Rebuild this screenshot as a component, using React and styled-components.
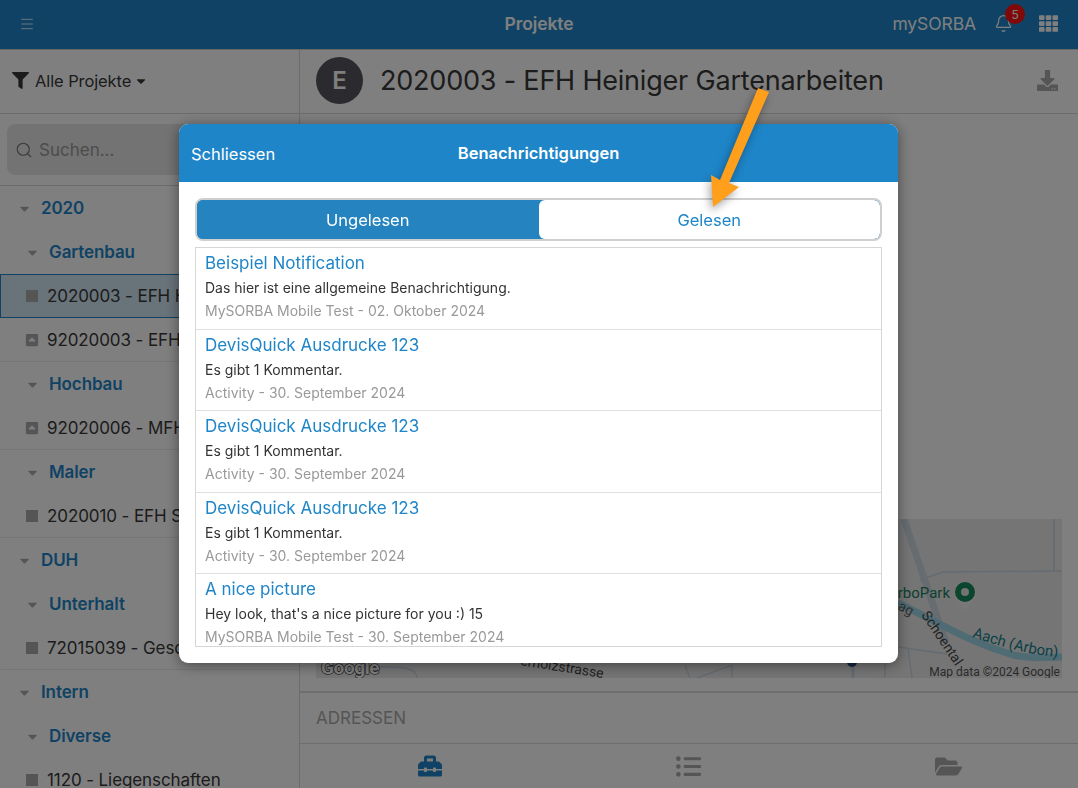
import React from "react";
import styled, { createGlobalStyle } from "styled-components";
import { Menu, Bell, Search } from "lucide-react";
import {
  FaFilter,
  FaCaretDown,
  FaTh,
  FaDownload,
  FaToolbox,
  FaListUl,
  FaFolderOpen,
  FaSquareFull,
  FaCaretSquareUp,
} from "react-icons/fa";

const tree = [
  { type: "year", label: "2020" },
  { type: "group", label: "Gartenbau" },
  { type: "item", label: "2020003 - EFH Heiniger Gartenarbeiten", selected: true },
  { type: "item", label: "92020003 - EFH Heiniger", sub: true },
  { type: "group", label: "Hochbau" },
  { type: "item", label: "92020006 - MFH Sonnenhof", sub: true },
  { type: "group", label: "Maler" },
  { type: "item", label: "2020010 - EFH Steiner" },
  { type: "year", label: "DUH" },
  { type: "group", label: "Unterhalt" },
  { type: "item", label: "72015039 - Geschäftshaus" },
  { type: "year", label: "Intern" },
  { type: "group", label: "Diverse" },
  { type: "item", label: "1120 - Liegenschaften" },
];

const notifications = [
  { title: "Beispiel Notification", text: "Das hier ist eine allgemeine Benachrichtigung.", meta: "MySORBA Mobile Test - 02. Oktober 2024" },
  { title: "DevisQuick Ausdrucke 123", text: "Es gibt 1 Kommentar.", meta: "Activity - 30. September 2024" },
  { title: "DevisQuick Ausdrucke 123", text: "Es gibt 1 Kommentar.", meta: "Activity - 30. September 2024" },
  { title: "DevisQuick Ausdrucke 123", text: "Es gibt 1 Kommentar.", meta: "Activity - 30. September 2024" },
  { title: "A nice picture", text: "Hey look, that's a nice picture for you :) 15", meta: "MySORBA Mobile Test - 30. September 2024" },
];

const GlobalStyle = createGlobalStyle`
  html, body {
    margin: 0;
    padding: 0;
    background: #fff;
    overflow: hidden;
  }
  * {
    box-sizing: border-box;
  }
  body {
    font-family: Inter, "Noto Sans", "Liberation Sans", sans-serif;
  }
`;

const Page = styled.div`
  width: 1078px;
  height: 788px;
  display: flex;
  flex-direction: column;
  overflow: hidden;
`;

const Header = styled.header`
  height: 50px;
  flex-shrink: 0;
  background: #1e85c8;
  border-bottom: 1px solid #d0d0d0;
  color: #fff;
  display: grid;
  grid-template-columns: 1fr auto 1fr;
  align-items: center;
  padding: 0 19px 2px;
`;

const HeaderTitle = styled.div`
  font-size: 17.5px;
  font-weight: 600;
  letter-spacing: -0.1px;
`;

const HeaderRight = styled.div`
  position: relative;
  display: flex;
  align-items: center;
  justify-content: flex-end;
  font-size: 17.5px;
  letter-spacing: -0.1px;
`;

const BellWrap = styled.div`
  position: relative;
  display: flex;
  margin-left: 18px;
  margin-right: 26px;
`;

const Badge = styled.span`
  position: absolute;
  top: -10px;
  left: 11px;
  width: 20px;
  height: 20px;
  border-radius: 50%;
  background: #ff1010;
  color: #fff;
  font-size: 12px;
  display: flex;
  align-items: center;
  justify-content: center;
`;

const Body = styled.div`
  flex: 1;
  display: flex;
  min-height: 0;
`;

const Sidebar = styled.aside`
  width: 300px;
  flex-shrink: 0;
  border-right: 1px solid #d8d8d8;
  overflow: hidden;
`;

const FilterBar = styled.div`
  height: 64px;
  border-bottom: 1px solid #d8d8d8;
  display: flex;
  align-items: center;
  padding: 0 12px 2px;
  gap: 6px;
  color: #383838;
  font-size: 16.5px;
`;

const FilterLabel = styled.span`
  display: flex;
  align-items: center;
  gap: 3px;
  letter-spacing: -0.1px;
`;

const SearchBar = styled.div`
  height: 72px;
  border-bottom: 1px solid #d8d8d8;
  padding: 10px 7px;
`;

const SearchBox = styled.div`
  height: 51px;
  background: #e6e6e6;
  border-radius: 8px;
  display: flex;
  align-items: center;
  gap: 6px;
  padding: 0 8px;
  color: #999;
  font-size: 17px;
`;

const TreeRow = styled.div`
  height: 44px;
  display: flex;
  align-items: center;
  white-space: nowrap;
  overflow: hidden;
  font-size: 17px;
  padding-left: ${(p) => (p.$type === "year" ? "16px" : "24px")};
  color: ${(p) => (p.$type === "item" ? "#383838" : "#1e85c8")};
  font-weight: ${(p) => (p.$type === "item" ? 400 : 600)};
  border: 1px solid ${(p) => (p.$selected ? "#1e85c8" : "transparent")};
  border-bottom-color: ${(p) => (p.$selected ? "#1e85c8" : p.$type === "item" ? "#ebebeb" : "transparent")};
  background: ${(p) => (p.$selected ? "#d3e6f5" : "transparent")};
  gap: ${(p) => (p.$type === "item" ? "8px" : "9px")};
  letter-spacing: -0.1px;

  &:first-child {
    height: 37px;
    padding-bottom: 7px;
  }
`;

const Caret = styled(FaCaretDown)`
  color: #aaa;
  flex-shrink: 0;
`;

const Main = styled.main`
  flex: 1;
  display: flex;
  flex-direction: column;
  min-width: 0;
`;

const TitleBar = styled.div`
  height: 64px;
  flex-shrink: 0;
  border-bottom: 1px solid #d8d8d8;
  display: flex;
  align-items: center;
  padding: 0 20px 2px 16px;
`;

const Avatar = styled.div`
  width: 47px;
  height: 47px;
  border-radius: 50%;
  background: #56565e;
  color: #fff;
  display: flex;
  align-items: center;
  justify-content: center;
  font-size: 24px;
  font-weight: 600;
  margin-right: 17px;
  flex-shrink: 0;
`;

const ProjectTitle = styled.h1`
  margin: 0;
  flex: 1;
  font-size: 27px;
  font-weight: 400;
  color: #383838;
  white-space: nowrap;
  letter-spacing: -0.2px;
`;

const Content = styled.div`
  flex: 1;
  min-height: 0;
  display: flex;
  flex-direction: column;
  justify-content: flex-end;
  padding: 0 16px 13px;
`;

const MapBox = styled.svg`
  display: block;
  width: 746px;
  height: 159px;
  background: #ebebeb;
`;

const SectionRow = styled.div`
  height: 53px;
  flex-shrink: 0;
  border-top: 2px solid #dcdcdc;
  border-bottom: 1px solid #dcdcdc;
  display: flex;
  align-items: center;
  padding: 0 16px;
  color: #aaa;
  font-size: 17px;
`;

const TabBar = styled.nav`
  height: 44px;
  flex-shrink: 0;
  display: grid;
  grid-template-columns: repeat(3, 1fr);
`;

const Tab = styled.div`
  display: flex;
  align-items: center;
  justify-content: center;
  color: ${(p) => (p.$active ? "#1e85c8" : "#aaa")};
`;

const Backdrop = styled.div`
  position: fixed;
  inset: 0;
  background: rgba(0, 0, 0, 0.5);
`;

const Modal = styled.section`
  position: fixed;
  left: 179px;
  top: 124px;
  width: 719px;
  height: 539px;
  background: #fff;
  border-radius: 9px;
  box-shadow: 0 2px 14px rgba(0, 0, 0, 0.45);
  overflow: hidden;
  display: flex;
  flex-direction: column;
`;

const ModalHeader = styled.div`
  height: 58px;
  flex-shrink: 0;
  background: #1e85c8;
  color: #fff;
  display: grid;
  grid-template-columns: 1fr auto 1fr;
  align-items: center;
  padding: 0 12px;
`;

const CloseButton = styled.span`
  font-size: 16.5px;
  padding-top: 1px;
`;

const ModalTitle = styled.div`
  font-size: 16.5px;
  font-weight: 600;
`;

const ModalBody = styled.div`
  flex: 1;
  min-height: 0;
  display: flex;
  flex-direction: column;
  padding: 16px 16px 16px;
`;

const Segments = styled.div`
  height: 43px;
  flex-shrink: 0;
  border: 2px solid #cfcfcf;
  border-radius: 8px;
  display: grid;
  grid-template-columns: 1fr 1fr;
  overflow: hidden;
  background: #2584c0;
  margin-bottom: 6px;
`;

const Segment = styled.div`
  display: flex;
  align-items: center;
  justify-content: center;
  font-size: 16.5px;
  color: ${(p) => (p.$active ? "#fff" : "#1e85c8")};
  background: ${(p) => (p.$active ? "#2584c0" : "#fff")};
  border-radius: ${(p) => (p.$active ? "0" : "6px")};
`;

const List = styled.div`
  flex: 1;
  min-height: 0;
  overflow: hidden;
  border: 1px solid #d6d6d6;
`;

const Item = styled.article`
  height: 81.5px;
  padding: 3px 9px 0;
  border-bottom: 1.5px solid #e0e0e0;

  &:last-child {
    border-bottom: none;
  }
`;

const ItemTitle = styled.div`
  font-size: 17px;
  line-height: 24px;
  color: #1e85c8;
`;

const ItemText = styled.div`
  font-size: 14px;
  line-height: 20px;
  margin-top: 3px;
  color: #333;
`;

const ItemMeta = styled.div`
  font-size: 14px;
  line-height: 20px;
  margin-top: 3px;
  color: #999;
`;

const Arrow = styled.svg`
  position: fixed;
  left: 0;
  top: 0;
  width: 1078px;
  height: 788px;
  pointer-events: none;
  filter: drop-shadow(-2px 4px 4px rgba(0, 0, 0, 0.35));
`;

const TreeIcon = ({ row }) => {
  if (row.type !== "item") return <Caret size={15} />;
  return row.sub ? (
    <FaCaretSquareUp size={14} color="#aaa" style={{ flexShrink: 0 }} />
  ) : (
    <FaSquareFull size={12} color="#aaa" style={{ flexShrink: 0, margin: "0 1px" }} />
  );
};

const MapDrawing = () => (
  <MapBox viewBox="0 0 746 159">
    <g fill="none" stroke="#c9d6e2" strokeWidth="1.5">
      <path d="M738 0V52M604 61L627 53L746 52" />
      <path d="M582 128L631 135M592 129L596 159M569 140V159" />
      <path d="M537 148V159" strokeWidth="3" />
      <path d="M369 146L374 159M381 159L416 146V159" />
      <path d="M60 148C75 148 101 146 101 159" />
    </g>
    <path d="M588 0L630 124" fill="none" stroke="#cfd9e3" strokeWidth="7" />
    <path d="M582 84C620 102 650 122 697 136C715 140 730 138 746 138" fill="none" stroke="#9fd6e6" strokeWidth="7" />
    <path id="riverlabel" d="M656 118C680 126 715 137 746 138" fill="none" />
    <text fontFamily="Roboto, sans-serif" fontSize="15" fill="#15808f">
      <textPath href="#riverlabel">Aach (Arbon)</textPath>
    </text>
    <text x="634" y="79" textAnchor="end" fontFamily="Roboto, sans-serif" fontSize="15" fill="#188060">ArboPark</text>
    <circle cx="649" cy="75" r="11" fill="#f0f0f0" />
    <path d="M641 80L649 92L657 80Z" fill="#f0f0f0" />
    <circle cx="649" cy="73" r="10" fill="#188a5c" />
    <circle cx="649" cy="73" r="4" fill="#e6e6e6" />
    <text fontFamily="Roboto, sans-serif" fontSize="14" fill="#444" transform="translate(605 96) rotate(56)">Schoental</text>
    <text fontFamily="Roboto, sans-serif" fontSize="14" fill="#666" transform="translate(581 90) rotate(28)">ag</text>
    <text x="744" y="157" textAnchor="end" fontFamily="Roboto, sans-serif" fontSize="12" fill="#555">Map data ©2024 Google</text>
    <text fontFamily="Roboto, sans-serif" fontSize="14" fill="#444" transform="translate(204 146) rotate(9)">erholzstrasse</text>
    <circle cx="536" cy="143" r="5" fill="#2c4c80" />
    <text x="5" y="155" fontFamily="Roboto, sans-serif" fontSize="19" fontWeight="700" fill="#fff" stroke="#222" strokeWidth="1.2" paintOrder="stroke" letterSpacing="-0.4">Google</text>
  </MapBox>
);

const App = () => (
  <>
    <GlobalStyle />
    <Page>
      <Header>
        <Menu size={16} strokeWidth={1.25} />
        <HeaderTitle>Projekte</HeaderTitle>
        <HeaderRight>
          mySORBA
          <BellWrap>
            <Bell size={19} strokeWidth={1.5} />
            <Badge>5</Badge>
          </BellWrap>
          <FaTh size={19} style={{ marginRight: 1 }} />
        </HeaderRight>
      </Header>
      <Body>
        <Sidebar>
          <FilterBar>
            <FaFilter size={17} />
            <FilterLabel>
              Alle Projekte <FaCaretDown size={14} />
            </FilterLabel>
          </FilterBar>
          <SearchBar>
            <SearchBox>
              <Search size={18} strokeWidth={1.5} color="#777" />
              Suchen...
            </SearchBox>
          </SearchBar>
          {tree.map((row, i) => (
            <TreeRow key={i} $type={row.type} $selected={row.selected}>
              <TreeIcon row={row} />
              {row.label}
            </TreeRow>
          ))}
        </Sidebar>
        <Main>
          <TitleBar>
            <Avatar>E</Avatar>
            <ProjectTitle>2020003 - EFH Heiniger Gartenarbeiten</ProjectTitle>
            <FaDownload size={21} color="#aaa" />
          </TitleBar>
          <Content>
            <MapDrawing />
          </Content>
          <SectionRow>ADRESSEN</SectionRow>
          <TabBar>
            <Tab $active><FaToolbox size={24} /></Tab>
            <Tab><FaListUl size={25} /></Tab>
            <Tab><FaFolderOpen size={27} /></Tab>
          </TabBar>
        </Main>
      </Body>
    </Page>
    <Backdrop />
    <Modal>
      <ModalHeader>
        <CloseButton>Schliessen</CloseButton>
        <ModalTitle>Benachrichtigungen</ModalTitle>
      </ModalHeader>
      <ModalBody>
        <Segments>
          <Segment $active>Ungelesen</Segment>
          <Segment>Gelesen</Segment>
        </Segments>
        <List>
          {notifications.map((n, i) => (
            <Item key={i}>
              <ItemTitle>{n.title}</ItemTitle>
              <ItemText>{n.text}</ItemText>
              <ItemMeta>{n.meta}</ItemMeta>
            </Item>
          ))}
        </List>
      </ModalBody>
    </Modal>
    <Arrow viewBox="0 0 1078 788">
      <path d="M758 88L769 92L729 183L739 187L713 207L711 175L720 180Z" fill="#ff9f1c" />
    </Arrow>
  </>
);

export default App;
